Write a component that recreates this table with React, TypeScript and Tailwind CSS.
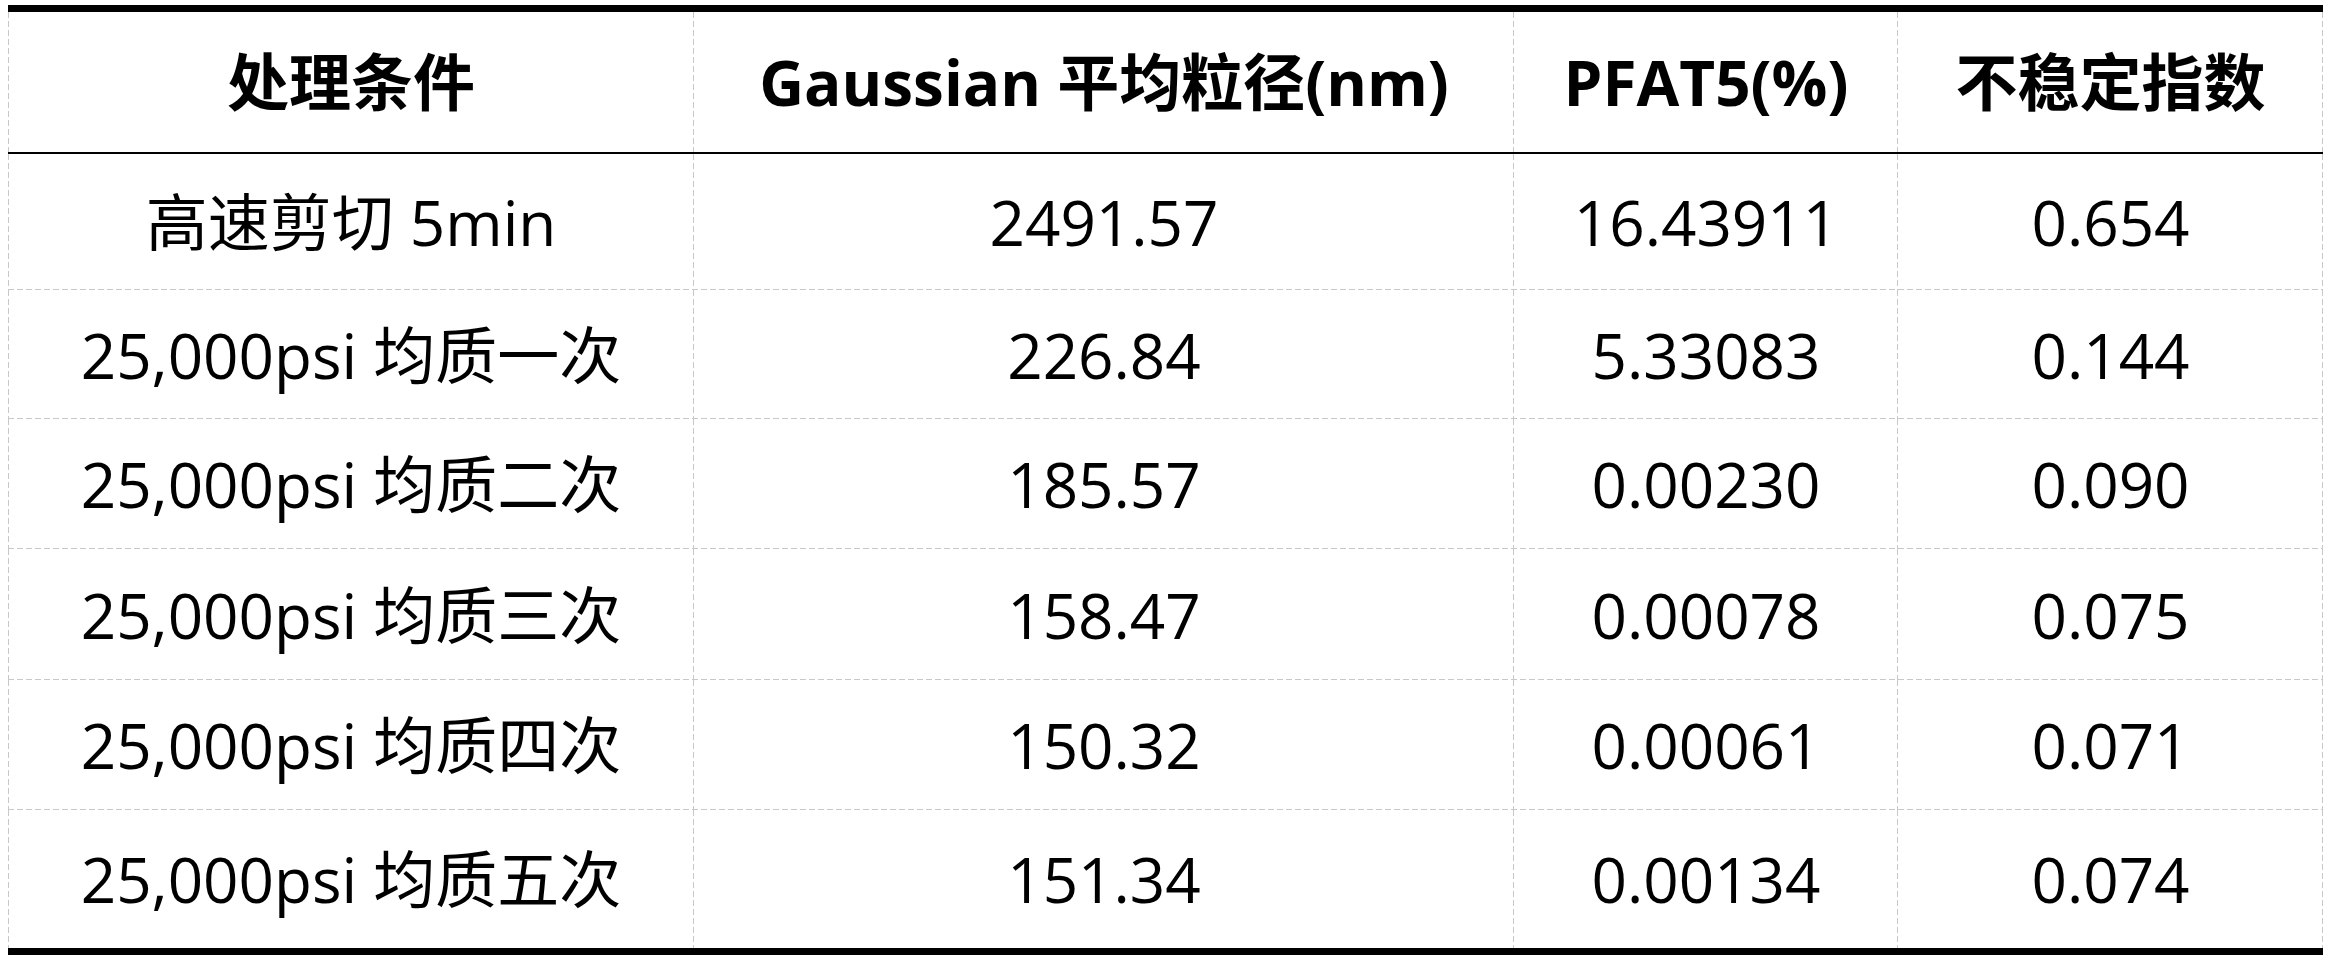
// Table: high-pressure homogenization results

const headers = ["处理条件", "Gaussian 平均粒径(nm)", "PFAT5(%)", "不稳定指数"];

const rows = [
  { h: "h-[136px]", cells: ["高速剪切 5min", "2491.57", "16.43911", "0.654"] },
  { h: "h-[129px]", cells: ["25,000psi 均质一次", "226.84", "5.33083", "0.144"] },
  { h: "h-[130px]", cells: ["25,000psi 均质二次", "185.57", "0.00230", "0.090"] },
  { h: "h-[131px]", cells: ["25,000psi 均质三次", "158.47", "0.00078", "0.075"] },
  { h: "h-[130px]", cells: ["25,000psi 均质四次", "150.32", "0.00061", "0.071"] },
  { h: "h-[138px]", cells: ["25,000psi 均质五次", "151.34", "0.00134", "0.074"] },
];

const cols = "grid grid-cols-[686px_820px_384px_425px]";

// dashed grid lines (6px dash, 3px gap) drawn as backgrounds
const dashRight =
  "[background:repeating-linear-gradient(to_bottom,#c8c8c8_0_6px,transparent_6px_9px)_right/1px_100%_no-repeat]";
const dashBoth =
  "[background:repeating-linear-gradient(to_bottom,#c8c8c8_0_6px,transparent_6px_9px)_right/1px_100%_no-repeat,repeating-linear-gradient(to_bottom,#c8c8c8_0_6px,transparent_6px_9px)_left/1px_100%_no-repeat]";
const dashBottom =
  "[background:repeating-linear-gradient(to_right,#c8c8c8_0_6px,transparent_6px_9px)_bottom/100%_1px_no-repeat]";

function Cell({ text, first, bold }: { text: string; first: boolean; bold?: boolean }) {
  return (
    <div
      className={`flex items-center justify-center whitespace-nowrap ${first ? dashBoth : dashRight} ${
        bold ? "font-bold" : "font-normal"
      }`}
    >
      {text}
    </div>
  );
}

export default function App() {
  return (
    <div className="min-h-[961px] w-[2331px] bg-white pt-[5px] pl-[8px]">
      <div
        className="w-[2315px] border-y-[7px] border-black text-[62px] leading-none text-black"
        style={{ fontFamily: '"Open Sans", "Noto Sans CJK SC", sans-serif' }}
      >
        {/* Header */}
        <div className={`${cols} h-[142px] border-b-2 border-black`}>
          {headers.map((t, i) => (
            <Cell key={t} text={t} first={i === 0} bold />
          ))}
        </div>

        {/* Body */}
        {rows.map((row, r) => (
          <div key={r} className={`${cols} ${row.h} ${r < rows.length - 1 ? dashBottom : ""}`}>
            {row.cells.map((t, i) => (
              <Cell key={i} text={t} first={i === 0} />
            ))}
          </div>
        ))}
      </div>
    </div>
  );
}
